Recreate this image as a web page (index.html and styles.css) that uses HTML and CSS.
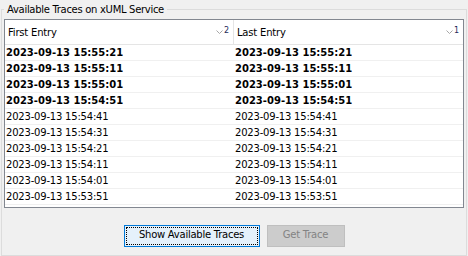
FILE: index.html
```html
<!DOCTYPE html>
<html lang="en">
<head>
    <meta charset="UTF-8">
    <title>Available Traces</title>
    <link rel="stylesheet" href="styles.css">
</head>
<body>
    <fieldset class="group">
        <legend>Available Traces on xUML Service</legend>
        <div class="list">
            <div class="list-head">
                <div class="col-head">
                    <span>First Entry</span>
                    <span class="sort">
                        <svg width="7" height="5" viewBox="0 0 7 5"><path d="M0.5 0.5 L3.5 3.5 L6.5 0.5" fill="none" stroke="#a6a6a6" stroke-width="1"/></svg>
                        <sup>2</sup>
                    </span>
                </div>
                <div class="col-head">
                    <span>Last Entry</span>
                    <span class="sort">
                        <svg width="7" height="5" viewBox="0 0 7 5"><path d="M0.5 0.5 L3.5 3.5 L6.5 0.5" fill="none" stroke="#a6a6a6" stroke-width="1"/></svg>
                        <sup>1</sup>
                    </span>
                </div>
            </div>
            <div class="rows">
                <div class="row bold"><span>2023-09-13 15:55:21</span><span>2023-09-13 15:55:21</span></div>
                <div class="row bold"><span>2023-09-13 15:55:11</span><span>2023-09-13 15:55:11</span></div>
                <div class="row bold"><span>2023-09-13 15:55:01</span><span>2023-09-13 15:55:01</span></div>
                <div class="row bold"><span>2023-09-13 15:54:51</span><span>2023-09-13 15:54:51</span></div>
                <div class="row"><span>2023-09-13 15:54:41</span><span>2023-09-13 15:54:41</span></div>
                <div class="row"><span>2023-09-13 15:54:31</span><span>2023-09-13 15:54:31</span></div>
                <div class="row"><span>2023-09-13 15:54:21</span><span>2023-09-13 15:54:21</span></div>
                <div class="row"><span>2023-09-13 15:54:11</span><span>2023-09-13 15:54:11</span></div>
                <div class="row"><span>2023-09-13 15:54:01</span><span>2023-09-13 15:54:01</span></div>
                <div class="row"><span>2023-09-13 15:53:51</span><span>2023-09-13 15:53:51</span></div>
            </div>
        </div>
        <div class="buttons">
            <button class="btn btn-focus">Show Available Traces</button>
            <button class="btn" disabled>Get Trace</button>
        </div>
    </fieldset>
</body>
</html>
```

FILE: styles.css
```css
html, body {
    margin: 0;
    height: 256px;
    background-color: #f0f0f0;
    font-family: 'DejaVu Sans', sans-serif;
    font-size: 10px;
    letter-spacing: -0.2px;
    color: #000;
    overflow: hidden;
}
body {
    display: flex;
    flex-direction: column;
}
.group {
    flex: 1;
    margin: 2px 1px 0 1px;
    padding: 3px 2px 0 2px;
    border: 1px solid #dcdcdc;
    min-width: 0;
}
.group legend {
    padding: 2px 3px 0 3px;
    line-height: 12px;
    letter-spacing: -0.3px;
}
.list {
    border: 1px solid #828790;
    background-color: #fff;
    height: 187px;
}
.list-head {
    display: grid;
    grid-template-columns: 229px 1fr;
    height: 24px;
    border-bottom: 1px solid #e5e5e5;
}
.col-head {
    display: flex;
    justify-content: space-between;
    padding: 2px 4px 0 3px;
    line-height: 22px;
}
.col-head:first-child {
    border-right: 1px solid #e5e5e5;
}
.sort {
    display: flex;
    align-items: flex-start;
    gap: 1px;
}
.sort svg {
    margin-top: 8px;
}
.sort sup {
    font-size: 8px;
    line-height: 10px;
    margin-top: 4px;
    vertical-align: baseline;
    color: #1c2a5a;
}
.row {
    display: grid;
    grid-template-columns: 229px 1fr;
    height: 15px;
    line-height: 15px;
    border-bottom: 1px solid #f0f0f0;
}
.row span {
    padding-left: 1px;
    white-space: nowrap;
}
.row.bold {
    font-weight: bold;
    letter-spacing: 0;
}
.buttons {
    display: flex;
    justify-content: center;
    gap: 7px;
    margin-top: 17px;
}
.btn {
    height: 22px;
    padding: 0 0 4px 0;
    line-height: 18px;
    font-family: 'DejaVu Sans', sans-serif;
    font-size: 10px;
    letter-spacing: -0.25px;
    color: #000;
    background-color: #e1e1e1;
    border: 1px solid #adadad;
    border-radius: 0;
}
.btn-focus {
    width: 136px;
    background-color: #e5f1fb;
    border-color: #0078d7;
    outline: 1px dotted #000;
    outline-offset: -3px;
}
.btn:disabled {
    width: 78px;
    color: #838383;
    background-color: #cccccc;
    border-color: #bfbfbf;
}
```
